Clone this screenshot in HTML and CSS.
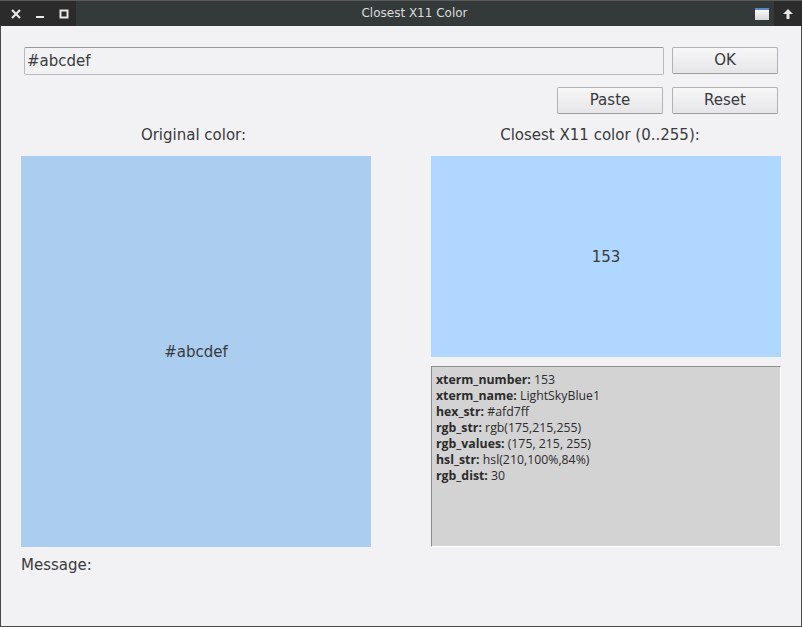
FILE: index.html
```html
<!DOCTYPE html>
<html>
<head>
<meta charset="utf-8">
<title>Closest X11 Color</title>
<link rel="stylesheet" href="styles.css">
</head>
<body>
<div class="window">
  <div class="titlebar">
    <div class="tb-left">
      <span class="tb-btn">
        <svg width="12" height="12" viewBox="0 0 12 12"><path d="M2 2 L10 10 M10 2 L2 10" stroke="#e8e8e8" stroke-width="2.2"/></svg>
      </span>
      <span class="tb-btn">
        <svg width="12" height="12" viewBox="0 0 12 12"><rect x="2" y="8" width="8" height="2" fill="#e8e8e8"/></svg>
      </span>
      <span class="tb-btn">
        <svg width="12" height="12" viewBox="0 0 12 12"><rect x="2.5" y="2.5" width="7" height="7" fill="none" stroke="#e8e8e8" stroke-width="2"/></svg>
      </span>
    </div>
    <div class="tb-title">Closest X11 Color</div>
    <div class="tb-right">
      <span class="tb-win">
        <svg width="14" height="12" viewBox="0 0 14 12"><defs><linearGradient id="g" x1="0" y1="0" x2="0" y2="1"><stop offset="0" stop-color="#ffffff"/><stop offset="1" stop-color="#d8d8d8"/></linearGradient></defs><rect x="0" y="0" width="14" height="12" fill="url(#g)"/><rect x="0" y="0" width="14" height="2" fill="#5b86c6"/></svg>
      </span>
      <span class="tb-up">
        <svg width="12" height="12" viewBox="0 0 12 12"><path d="M6 1 L11 6 L7.5 6 L7.5 11 L4.5 11 L4.5 6 L1 6 Z" fill="#e8e8e8"/></svg>
      </span>
    </div>
  </div>
  <div class="content">
    <div class="row row-input">
      <div class="input">#abcdef</div>
      <div class="btn">OK</div>
    </div>
    <div class="row row-buttons">
      <div class="btn">Paste</div>
      <div class="btn">Reset</div>
    </div>
    <div class="columns">
      <div class="col">
        <div class="label label-left">Original color:</div>
        <div class="swatch swatch-orig">#abcdef</div>
      </div>
      <div class="col">
        <div class="label label-right">Closest X11 color (0..255):</div>
        <div class="swatch swatch-x11">153</div>
        <div class="info">
          <div><b>xterm_number:</b> 153</div>
          <div><b>xterm_name:</b> LightSkyBlue1</div>
          <div><b>hex_str:</b> #afd7ff</div>
          <div><b>rgb_str:</b> rgb(175,215,255)</div>
          <div><b>rgb_values:</b> (175, 215, 255)</div>
          <div><b>hsl_str:</b> hsl(210,100%,84%)</div>
          <div><b>rgb_dist:</b> 30</div>
        </div>
      </div>
    </div>
    <div class="message">Message:</div>
  </div>
</div>
</body>
</html>
```

FILE: styles.css
```css
html, body {
  margin: 0;
  padding: 0;
  background: #f2f2f4;
}
body {
  font-family: "DejaVu Sans", sans-serif;
  font-size: 15px;
  color: #3a3a3c;
}
.window {
  width: 802px;
  height: 627px;
  box-sizing: border-box;
  border: 1px solid #484848;
  border-top: none;
  display: flex;
  flex-direction: column;
  background: #f2f2f4;
}
.titlebar {
  height: 26px;
  flex: none;
  box-sizing: border-box;
  border-top: 1px solid #5a5a5a;
  background: #343a3a;
  display: flex;
  align-items: stretch;
  margin: 0 -1px;
}
.tb-left {
  width: 76px;
  box-sizing: border-box;
  background: #2b2b2b;
  display: flex;
  align-items: center;
  padding-left: 10px;
  gap: 12px;
}
.tb-btn {
  width: 12px;
  height: 12px;
  display: flex;
}
.tb-title {
  flex: 1;
  text-align: center;
  color: #dcdcdc;
  font-size: 12px;
  line-height: 25px;
  padding-left: 10px;
  padding-right: 12px;
}
.tb-right {
  display: flex;
  align-items: stretch;
}
.tb-win {
  display: flex;
  align-items: center;
  padding-right: 5px;
}
.tb-up {
  width: 28px;
  background: #2b2b2b;
  display: flex;
  align-items: center;
  justify-content: center;
}
.content {
  flex: 1;
  padding: 21px 19px 0 20px;
  display: flex;
  flex-direction: column;
}
.row {
  display: flex;
  padding-left: 3px;
  padding-right: 4px;
}
.row-input {
  gap: 8px;
}
.row-buttons {
  justify-content: flex-end;
  margin-top: 12px;
  gap: 9px;
}
.input {
  flex: 1;
  height: 28px;
  box-sizing: border-box;
  border: 1px solid #b9b9bb;
  border-top-color: #9a9a9c;
  border-radius: 2px;
  padding: 0 2px;
  line-height: 26px;
  background: #f2f2f4;
}
.btn {
  width: 106px;
  height: 27px;
  box-sizing: border-box;
  border: 1px solid #b2b2b4;
  border-bottom-color: #9c9c9e;
  border-radius: 2px;
  background: linear-gradient(#f7f7f8, #e6e6e8);
  text-align: center;
  line-height: 25px;
}
.columns {
  display: flex;
  gap: 60px;
  margin-top: 12px;
}
.col {
  width: 350px;
  display: flex;
  flex-direction: column;
}
.label {
  text-align: center;
  line-height: 18px;
  height: 18px;
  margin-bottom: 12px;
}
.label-left {
  padding-right: 5px;
}
.label-right {
  padding-right: 12px;
}
.swatch {
  display: flex;
  align-items: center;
  justify-content: center;
}
.swatch-orig {
  height: 391px;
  background: #abcdef;
}
.swatch-x11 {
  height: 201px;
  background: #afd7ff;
}
.info {
  margin-top: 9px;
  height: 181px;
  box-sizing: border-box;
  background: #d3d3d3;
  border: 1px solid #ffffff;
  border-top-color: #8c8c8c;
  border-left-color: #8c8c8c;
  padding: 5px 4px;
  font-family: "Open Sans", sans-serif;
  font-size: 12.3px;
  line-height: 16px;
  color: #2c2c2c;
}
.info b {
  font-weight: 700;
}
.message {
  margin-top: 9px;
  line-height: 18px;
}
```
